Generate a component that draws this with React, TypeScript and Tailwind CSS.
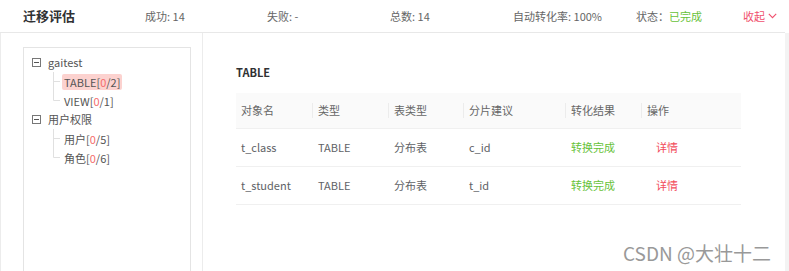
import React from "react";

const font = { fontFamily: '"Noto Sans CJK SC", "Noto Sans", sans-serif' };

function Connector({ last }: { last?: boolean }) {
  return (
    <svg width="9" height="19" viewBox="0 0 9 19" className="shrink-0">
      <line x1="0.5" y1="0" x2="0.5" y2={last ? 9.5 : 19} stroke="#e0e0e0" strokeWidth="1" />
      <line x1="0.5" y1="9.5" x2="7" y2="9.5" stroke="#e0e0e0" strokeWidth="1" />
    </svg>
  );
}

function Minus() {
  return (
    <svg width="9" height="9" viewBox="0 0 9 9" className="shrink-0">
      <rect x="0.5" y="0.5" width="8" height="8" fill="white" stroke="#777" strokeWidth="1" />
      <line x1="2" y1="4.5" x2="7" y2="4.5" stroke="#555" strokeWidth="1" />
    </svg>
  );
}

function Label({ name, count, active }: { name: string; count: string; active?: boolean }) {
  return (
    <span className={`px-[2px] h-[16px] leading-[16px] rounded-[2px] ${active ? "bg-[#fcd2cf]" : ""}`}>
      {name}[<span className="text-[#f56c6c]">0</span>/{count}]
    </span>
  );
}

const cols = ["w-[76px]", "w-[76px]", "w-[75px]", "w-[102px]", "w-[76px]", "w-[100px]"];
const heads = ["对象名", "类型", "表类型", "分片建议", "转化结果", "操作"];
const rows = [
  ["t_class", "TABLE", "分布表", "c_id"],
  ["t_student", "TABLE", "分布表", "t_id"],
];

export default function App() {
  return (
    <div style={font} className="relative w-[789px] h-[271px] bg-white overflow-hidden flex flex-col text-[#606266]">
      <div className="w-[785px] h-[33px] shrink-0 border-b border-[#e8e8e8] flex items-center pl-[23px] text-[11px] text-[#666]">
        <div className="w-[122px] text-[13px] font-bold text-[#303133]">迁移评估</div>
        <div className="w-[122px]">成功: 14</div>
        <div className="w-[123px]">失败: -</div>
        <div className="w-[123px]">总数: 14</div>
        <div className="w-[123px]">自动转化率: 100%</div>
        <div className="w-[107px]">
          状态：<span className="text-[#67c23a]">已完成</span>
        </div>
        <div className="flex items-center gap-[3px] text-[#f0506e]">
          收起
          <svg width="9" height="6" viewBox="0 0 9 6">
            <polyline points="0.8,0.8 4.5,4.6 8.2,0.8" fill="none" stroke="#f0506e" strokeWidth="1.1" />
          </svg>
        </div>
      </div>
      <div className="flex flex-1 min-h-0">
        <div className="w-[203px] shrink-0 border-l border-r border-[#ececec] pl-[22px] pr-[11px] pt-[14px] flex">
          <div className="flex-1 border-t border-l border-r border-[#e4e4e4] pt-[5px] text-[11px] text-[#555]">
            <div className="flex items-center h-[19px] pl-[8px] gap-[7px]">
              <Minus />
              <span>gaitest</span>
            </div>
            <div className="flex items-center h-[19px] pl-[29px]">
              <Connector />
              <Label name="TABLE" count="2" active />
            </div>
            <div className="flex items-center h-[19px] pl-[29px]">
              <Connector last />
              <Label name="VIEW" count="1" />
            </div>
            <div className="flex items-center h-[19px] pl-[8px] gap-[7px]">
              <Minus />
              <span>用户权限</span>
            </div>
            <div className="flex items-center h-[19px] pl-[29px]">
              <Connector />
              <Label name="用户" count="5" />
            </div>
            <div className="flex items-center h-[19px] pl-[29px]">
              <Connector last />
              <Label name="角色" count="6" />
            </div>
          </div>
        </div>
        <div className="flex-1 pl-[33px] pt-[31px] text-[11px]">
          <div className="h-[16px] leading-[16px] font-bold text-[#303133]">TABLE</div>
          <div className="mt-[13px] w-[505px]">
            <div className="flex h-[36px] bg-[#fafafa] border-b border-[#f0f0f0] items-center text-[#666]">
              {heads.map((h, i) => (
                <div key={h} className={`${cols[i]} flex items-center h-full`}>
                  {i > 0 && <div className="w-px h-[15px] bg-[#ececec] mr-[5px]" />}
                  <span className={i === 0 ? "pl-[5px]" : ""}>{h}</span>
                </div>
              ))}
            </div>
            {rows.map((r) => (
              <div key={r[0]} className="flex h-[38px] items-center border-b border-[#f0f0f0]">
                {r.map((c, i) => (
                  <div key={i} className={`${cols[i]} ${i === 0 ? "pl-[5px]" : "pl-[6px]"}`}>
                    {c}
                  </div>
                ))}
                <div className={`${cols[4]} pl-[6px] text-[#67c23a]`}>转换完成</div>
                <div className={`${cols[5]} pl-[15px] text-[#f24c5c]`}>详情</div>
              </div>
            ))}
          </div>
        </div>
        <div className="w-[4px] shrink-0 bg-[#f3f3f3]" />
      </div>
      <div className="absolute left-[623px] top-[240px] text-[19px] leading-[26px] text-[#999] [text-shadow:0_0_2px_#fff]">
        CSDN @大壮十二
      </div>
    </div>
  );
}
